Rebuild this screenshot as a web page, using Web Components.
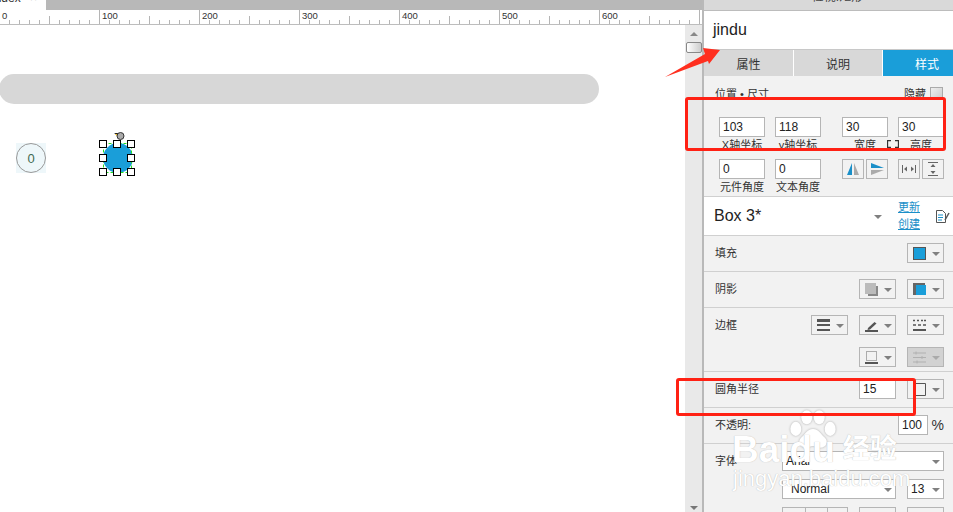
<!DOCTYPE html>
<html lang="zh">
<head>
<meta charset="utf-8">
<title>jindu</title>
<style>
  html, body { margin: 0; height: 512px; overflow: hidden; background: #fff; }
  body { font: 12px "Liberation Sans", "Noto Sans CJK SC", sans-serif; color: #333; }
  svg { display: block; }
</style>
</head>
<body>
<ax-app>
  <ax-editor slot="editor"></ax-editor>
  <ax-panel slot="panel">
    <ax-row h="121">
      <ax-pos></ax-pos>
    </ax-row>
    <ax-master></ax-master>
    <ax-row label="填充" h="36">
      <ax-drop><svg width="13" height="13"><rect x=".5" y=".5" width="12" height="12" fill="#1a9ed9" stroke="#555"/></svg></ax-drop>
    </ax-row>
    <ax-row label="阴影" h="36">
      <ax-drop><svg width="13" height="13"><rect x="3" y="3" width="10" height="10" fill="#888"/><rect width="11" height="11" fill="#bbb"/></svg></ax-drop>
      <ax-drop><svg width="13" height="13"><rect width="12" height="12" fill="#666"/><rect x="3" y="2" width="10" height="10" fill="#1a9ed9"/></svg></ax-drop>
    </ax-row>
    <ax-row label="边框" h="64">
      <ax-drop><svg width="13" height="13"><rect width="13" height="3" fill="#555"/><rect y="5" width="13" height="2" fill="#555"/><rect y="10" width="13" height="2" fill="#555"/></svg></ax-drop>
      <ax-drop><svg width="13" height="13"><path d="M3 9 9.500 3l2 1.500L5 10.500 2.500 11z" fill="#555"/><rect y="11" width="13" height="2" fill="#555"/></svg></ax-drop>
      <ax-drop><svg width="13" height="13"><path d="M0 1.500h2M4 1.500h2M8 1.500h2M11 1.500h2M0 6h3M5 6h3M10 6h3" stroke="#555" stroke-width="1.400"/><rect y="10" width="13" height="2" fill="#555"/></svg></ax-drop>
      <ax-drop break><svg width="13" height="13"><rect x="1.500" y=".5" width="10" height="9" fill="none" stroke="#666" stroke-dasharray="1 1"/><rect x="0" y="11" width="13" height="2" fill="#555"/></svg></ax-drop>
      <ax-drop disabled><svg width="13" height="13"><path d="M0 2h13M0 11h13M0 6.500h13" stroke="#b0b0b0"/><path d="M3 .5v3M9 5v3M4 9.500v3" stroke="#b0b0b0"/></svg></ax-drop>
    </ax-row>
    <ax-row label="圆角半径" h="36">
      <ax-input value="15" style="--w:37px"></ax-input>
      <ax-drop><svg width="13" height="13"><path d="M.5 12.500V3Q.5.5 3 .5h9.500v12z" fill="none" stroke="#555"/></svg></ax-drop>
    </ax-row>
    <ax-row label="不透明:" h="36">
      <ax-input value="100" style="--w:30px"></ax-input><span style="margin-left:-11px;font-size:14px;width:16px;line-height:20px;text-align:right">%</span>
    </ax-row>
    <ax-row label="字体" h="80" noline>
      <ax-select value="Arial" style="--w:162px"></ax-select>
      <ax-select value="Normal" pad="8" style="--w:114px"></ax-select>
      <ax-select value="13" style="--w:37px"></ax-select>
      <ax-strip></ax-strip>
    </ax-row>
  </ax-panel>
</ax-app>

<script>
  const FONT = '"Liberation Sans", "Noto Sans CJK SC", sans-serif'

  // Little helper, every element below builds its shadow root the same way
  function shadow(el, html) {
    const root = el.attachShadow({ mode: 'open' })
    root.innerHTML = html
    return root
  }

  class AxApp extends HTMLElement {
    connectedCallback() {
      shadow(this, `
        <style>
          :host { display: grid; grid-template-columns: 702px 2px 249px; width: 953px; height: 512px; position: relative; overflow: hidden; font-family: ${FONT}; }
          .split { background: #b9b9b9; }
          .mark { position: absolute; border: 3px solid #ff2114; border-radius: 3px; box-sizing: border-box; }
          .a { left: 685px; top: 97px; width: 261px; height: 54px; }
          .b { left: 676px; top: 378px; width: 240px; height: 38px; }
          .arrow { position: absolute; left: 660px; top: 44px; }
          ax-watermark { position: absolute; left: 725px; top: 410px; }
        </style>
        <slot name="editor"></slot>
        <div class="split"></div>
        <slot name="panel"></slot>
        <ax-watermark></ax-watermark>
        <div class="mark a"></div>
        <div class="mark b"></div>
        <svg class="arrow" width="64" height="36"><path d="M5 33 45 10 43 4 60 6 49 20 48 17z" fill="#ff2f1f"/></svg>
      `)
    }
  }

  class AxEditor extends HTMLElement {
    connectedCallback() {
      shadow(this, `
        <style>
          :host { display: flex; flex-direction: column; height: 512px; overflow: hidden; }
          .tabs { height: 10px; background: #b8b8b8; flex: none; overflow: hidden; }
          .tab { width: 46px; height: 10px; background: #fff; font-size: 12px; line-height: 10px; overflow: hidden; color: #333; }
          .tab span { display: block; margin: -7px 0 0 -8px; white-space: nowrap; }
          .tab i { font-style: normal; color: #aaa; margin-left: 6px; }
          .body { flex: 1; display: flex; min-height: 0; }
          .bar { width: 17px; background: #e9e9e9; flex: none; display: flex; flex-direction: column; align-items: center; position: relative; }
          .up, .down { width: 0; height: 0; border: 4px solid transparent; border-top: 0; border-bottom: 4px solid #888; margin-top: 7px; }
          .thumb { width: 14px; height: 9px; border: 1px solid #888; border-radius: 2px; margin-top: 6px; background: linear-gradient(90deg, #fff, #ccc); }
          .down { border-bottom: 0; border-top: 4px solid #777; margin-top: auto; margin-bottom: 2px; }
        </style>
        <div class="tabs"><div class="tab"><span>index<i> ×</i></span></div></div>
        <ax-ruler></ax-ruler>
        <div class="body">
          <ax-canvas></ax-canvas>
          <div class="bar"><div class="up"></div><div class="thumb"></div><div class="down"></div></div>
        </div>
      `)
    }
  }

  class AxRuler extends HTMLElement {
    connectedCallback() {
      let ticks = ''
      let labels = ''
      for (let i = 0; i <= 70; i++) {
        const x = i * 10 - 0.5
        const top = i % 10 === 0 ? 0 : i % 5 === 0 ? 6 : 10
        ticks += `M${x} ${top}V14`
        if (i % 10 === 0) {
          labels += `<text x="${i * 10 + 2}" y="9">${i * 10}</text>`
        }
      }
      shadow(this, `
        <style>
          :host { display: block; height: 15px; flex: none; background: #fff; }
          text { font: 9.500px "Liberation Sans", sans-serif; fill: #333; }
        </style>
        <svg width="702" height="15">
          <path d="${ticks}" stroke="#b5b5b5" fill="none"/>
          <rect y="14" width="702" height="1" fill="#bdbdbd"/>
          ${labels}
        </svg>
      `)
    }
  }

  // The canvas is a free surface, its widgets sit at their own coordinates
  class AxCanvas extends HTMLElement {
    connectedCallback() {
      const handles = [[99,140],[113,140],[127,140],[99,154],[127,154],[99,168],[113,168],[127,168]]
        .map(([x, y]) => `<rect x="${x + 0.5}" y="${y - 24.5}" width="7" height="7" fill="#fff" stroke="#000" stroke-width="1"/>`)
        .join('')
      shadow(this, `
        <style>
          :host { display: block; flex: 1; position: relative; background: #fff; overflow: hidden; }
          .pill { position: absolute; left: -1px; top: 49px; width: 600px; height: 30px; border-radius: 15px; background: #d7d7d7; }
          .num { position: absolute; left: 16px; top: 118px; width: 30px; height: 30px; background: #eef7fa; }
          .num div { box-sizing: border-box; width: 30px; height: 30px; border: 1px solid #999; border-radius: 50%; display: flex; align-items: center; justify-content: center; font-size: 13px; color: #3f6b52; }
          svg { position: absolute; left: 0; top: 0; }
        </style>
        <div class="pill"></div>
        <div class="num"><div>0</div></div>
        <svg width="200" height="170">
          <circle cx="118" cy="133" r="15" fill="#1a9ed9"/>
          <rect x="103.500" y="118.500" width="28" height="29" fill="none" stroke="#22e022" stroke-dasharray="3 2"/>
          ${handles}
          <path d="M114 108h6l1 5z" fill="#222"/>
          <path d="M115 109h3l-1 2z" fill="#f0c020"/>
          <circle cx="120.500" cy="111" r="3.500" fill="#aaa" stroke="#333"/>
        </svg>
      `)
    }
  }

  class AxPanel extends HTMLElement {
    connectedCallback() {
      shadow(this, `
        <style>
          :host { display: flex; flex-direction: column; height: 512px; overflow: hidden; background: #f2f2f2; font-family: ${FONT}; }
          .head { height: 10px; background: #d9d9d9; border-bottom: 1px solid #bcbcbc; overflow: hidden; text-align: center; flex: none; }
          .head span { display: block; margin-top: -10px; font-size: 12px; line-height: 14px; color: #444; padding-left: 18px; }
          .name { height: 38px; background: #fff; border-bottom: 1px solid #c8c8c8; flex: none; display: flex; align-items: center; padding-left: 9px; font-size: 16px; color: #222; }
          .tabs { display: grid; grid-template-columns: 89px 88px 70px; column-gap: 1px; height: 26px; flex: none; background: #fff; }
          .tabs div { background: #d8d8d8; display: flex; align-items: center; justify-content: center; color: #333; }
          .tabs .on { background: #1a9ed9; color: #fff; padding-left: 18px; }
        </style>
        <div class="head"><span>检视:矩形</span></div>
        <div class="name">jindu</div>
        <div class="tabs"><div>属性</div><div>说明</div><div class="on">样式</div></div>
        <slot></slot>
      `)
    }
  }

  // A settings row: label on the left, controls pushed to the right
  class AxRow extends HTMLElement {
    connectedCallback() {
      const h = this.getAttribute('h') || 36
      const label = this.getAttribute('label')
      shadow(this, `
        <style>
          :host { display: flex; box-sizing: border-box; height: ${h}px; flex: none; border-bottom: 1px solid #d0d0d0; padding: 7px 9px 0 11px; font-size: 11px; color: #333; }
          :host([noline]) { border-bottom: 0; }
          .label { flex: none; width: 67px; line-height: 20px; }
          .controls { flex: 1; display: flex; flex-wrap: wrap; justify-content: flex-end; align-items: flex-start; gap: 8px 11px; }
        </style>
        ${label ? `<div class="label">${label}</div>` : ''}
        <div class="controls"><slot></slot></div>
      `)
    }
  }

  class AxInput extends HTMLElement {
    connectedCallback() {
      shadow(this, `
        <style>
          :host { display: flex; align-items: center; box-sizing: border-box; width: var(--w, 46px); height: 20px; background: #fff; border: 1px solid #b5b5b5; padding-left: 3px; font-size: 12px; color: #222; flex: none; }
        </style>
        ${this.getAttribute('value')}
      `)
    }
  }

  const CARET = '<span class="caret"></span>'
  const DROP_CSS = `
    .caret { width: 0; height: 0; border: 4px solid transparent; border-bottom: 0; border-top: 4px solid #808080; margin-top: 1px; }
  `

  class AxDrop extends HTMLElement {
    connectedCallback() {
      shadow(this, `
        <style>
          :host { display: flex; align-items: center; justify-content: space-between; box-sizing: border-box; width: 37px; height: 20px; border: 1px solid #b5b5b5; padding: 0 3px 0 5px; flex: none; }
          :host([disabled]) { background: #d2d2d2; }
          :host([disabled]) .caret { border-top-color: #aaa; }
          :host([break]) { margin-left: 48px; }
          ${DROP_CSS}
        </style>
        <slot></slot>${CARET}
      `)
    }
  }

  class AxSelect extends HTMLElement {
    connectedCallback() {
      const pad = this.getAttribute('pad') || 3
      shadow(this, `
        <style>
          :host { display: flex; align-items: center; justify-content: space-between; box-sizing: border-box; width: var(--w); height: 20px; background: #fff; border: 1px solid #b5b5b5; padding: 0 3px 0 ${pad}px; font-size: 12px; color: #222; flex: none; }
          ${DROP_CSS}
        </style>
        <span>${this.getAttribute('value')}</span>${CARET}
      `)
    }
  }

  // Position and size block, two rows of field + caption
  class AxPos extends HTMLElement {
    connectedCallback() {
      const field = (value, label) => `<div class="f"><ax-input value="${value}"></ax-input><span>${label}</span></div>`
      const btn = (svg) => `<div class="b">${svg}</div>`
      shadow(this, `
        <style>
          :host { display: block; width: 229px; font-size: 11px; color: #333; margin-top: 4px; }
          .top { display: flex; justify-content: space-between; align-items: center; height: 12px; padding-right: 1px; }
          .top .hide { display: flex; align-items: center; gap: 4px; }
          .check { box-sizing: border-box; width: 13px; height: 13px; border: 1px solid #aaa; background: linear-gradient(135deg, #eee, #ccc); }
          .grid { display: grid; grid-template-columns: repeat(4, 46px); column-gap: 10px; margin: 18px 0 0 4px; row-gap: 7px; }
          .grid > * { width: 46px; }
          .grid > :nth-child(3), .grid > :nth-child(7), .grid > :nth-child(4), .grid > :nth-child(8) { margin-left: 11px; }
          .f { display: flex; flex-direction: column; align-items: center; position: relative; }
          .f span { line-height: 14px; margin-top: 1px; white-space: nowrap; }
          .link { position: absolute; left: -11px; top: 23px; }
          .pair { display: flex; justify-content: space-between; }
          .b { box-sizing: border-box; width: 22px; height: 20px; border: 1px solid #b5b5b5; background: #f2f2f2; display: flex; align-items: center; justify-content: center; }
        </style>
        <div class="top"><span>位置 • 尺寸</span><span class="hide">隐藏<span class="check"></span></span></div>
        <div class="grid">
          ${field(103, 'X轴坐标')}${field(118, 'y轴坐标')}${field(30, '宽度')}
          <div class="f"><ax-input value="30"></ax-input><span>高度</span>
            <svg class="link" width="12" height="8"><path d="M4 .5H.5v7H4M8 .5h3.500v7H8" fill="none" stroke="#333" stroke-width="1.300"/></svg></div>
          ${field(0, '元件角度')}${field(0, '文本角度')}
          <div class="pair">
            ${btn('<svg width="14" height="14"><path d="M6 1v12H1z" fill="#1a8fc8"/><path d="M8 1v12h5z" fill="#aaa"/></svg>')}
            ${btn('<svg width="14" height="14"><path d="M1 1l13 5H1z" fill="#1a8fc8"/><path d="M1 8h13L1 13z" fill="#aaa"/></svg>')}
          </div>
          <div class="pair">
            ${btn('<svg width="14" height="14"><path d="M.5 3v8M13.500 3v8" stroke="#666"/><path d="M2 7l3-2.500v5zM12 7 9 4.500v5z" fill="#666"/></svg>')}
            ${btn('<svg width="14" height="14"><path d="M2 .5h10M2 13.500h10" stroke="#666"/><path d="M7 2 4.500 5h5zM7 12 4.500 9h5z" fill="#666"/></svg>')}
          </div>
        </div>
      `)
    }
  }

  class AxMaster extends HTMLElement {
    connectedCallback() {
      shadow(this, `
        <style>
          :host { display: flex; align-items: center; box-sizing: border-box; height: 39px; flex: none; background: #fff; border-bottom: 1px solid #d0d0d0; padding: 0 3px 0 10px; color: #222; }
          .title { font-size: 16px; flex: 1; }
          .caret { width: 0; height: 0; border: 4px solid transparent; border-bottom: 0; border-top: 4px solid #808080; margin-right: 16px; margin-top: 2px; }
          .links { display: flex; flex-direction: column; gap: 3px; font-size: 11px; line-height: 14px; margin: -2px 16px 0 0; }
          .links span { color: #1a8fc8; text-decoration: underline; }
        </style>
        <span class="title">Box 3*</span>
        <span class="caret"></span>
        <span class="links"><span>更新</span><span>创建</span></span>
        <svg width="14" height="13"><path d="M.5.5h6l3 3v9h-9z" fill="#fff" stroke="#555"/><path d="M2 5h5M2 7.500h5M2 10h4" stroke="#1a8fc8"/><path d="M9 10l4-7" stroke="#555" stroke-width="1.500"/></svg>
      `)
    }
  }

  // The row that gets cut off by the bottom of the window
  class AxStrip extends HTMLElement {
    connectedCallback() {
      shadow(this, `
        <style>
          :host { display: flex; justify-content: flex-end; gap: 11px; width: 162px; flex: none; }
          .three { display: grid; grid-template-columns: repeat(3, 22px); width: 66px; height: 20px; box-sizing: border-box; border: 1px solid #b5b5b5; }
          .three i + i { border-left: 1px solid #b5b5b5; }
          .one { box-sizing: border-box; width: 37px; height: 20px; border: 1px solid #b5b5b5; }
        </style>
        <div class="three"><i></i><i></i><i></i></div>
        <div class="one"></div>
        <div class="one"></div>
      `)
    }
  }

  class AxWatermark extends HTMLElement {
    connectedCallback() {
      shadow(this, `
        <style>
          :host { display: block; width: 190px; height: 90px; pointer-events: none; color: #fff; font-family: ${FONT}; text-shadow: 0 0 1px #aaa; }
          .wrap { display: grid; grid-template-columns: auto auto; justify-content: start; height: 90px; position: relative; padding-left: 7px; }
          .bai { font-size: 37px; font-weight: bold; line-height: 40px; margin-top: 20px; }
          .jing { font-size: 27px; font-weight: bold; line-height: 30px; margin: 24px 0 0 8px; }
          .url { position: absolute; left: 8px; top: 56px; font-size: 22px; line-height: 25px; white-space: nowrap; }
          svg { position: absolute; left: 63px; top: 0; filter: drop-shadow(0 0 1px #aaa); }
        </style>
        <svg width="50" height="44" viewBox="0 0 64 56" fill="#fff">
          <ellipse cx="10" cy="24" rx="7" ry="9"/><ellipse cx="24" cy="9" rx="7" ry="9"/><ellipse cx="40" cy="9" rx="7" ry="9"/><ellipse cx="54" cy="24" rx="7" ry="9"/>
          <path d="M32 24c8 0 10 7 15 11 5 5 3 13-6 13-4 0-6-2-9-2s-5 2-9 2c-9 0-11-8-6-13 5-4 7-11 15-11z"/>
        </svg>
        <div class="wrap">
          <span class="bai">Baidu</span>
          <span class="jing">经验</span>
          <span class="url">jingyan.baidu.com</span>
        </div>
      `)
    }
  }

  customElements.define('ax-app', AxApp)
  customElements.define('ax-editor', AxEditor)
  customElements.define('ax-ruler', AxRuler)
  customElements.define('ax-canvas', AxCanvas)
  customElements.define('ax-panel', AxPanel)
  customElements.define('ax-row', AxRow)
  customElements.define('ax-input', AxInput)
  customElements.define('ax-drop', AxDrop)
  customElements.define('ax-select', AxSelect)
  customElements.define('ax-pos', AxPos)
  customElements.define('ax-master', AxMaster)
  customElements.define('ax-strip', AxStrip)
  customElements.define('ax-watermark', AxWatermark)
</script>
</body>
</html>
